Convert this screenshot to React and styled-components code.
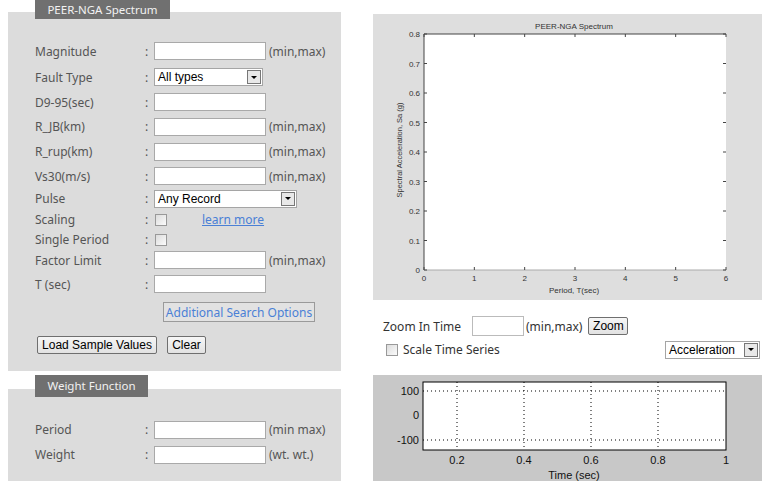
import React from 'react'
import styled, { createGlobalStyle } from 'styled-components';

const GlobalStyle = createGlobalStyle`
	html, body { margin: 0; padding: 0; background: #fff; }
	body { font-family: 'Noto Sans', 'DejaVu Sans', sans-serif; overflow: hidden; }
`;

const Page = styled.div`
	display: grid;
	grid-template-columns: 333px 389px;
	column-gap: 32px;
	padding-left: 8px;
	width: 784px;
	height: 481px;
	box-sizing: border-box;
	overflow: hidden;
`;

const Column = styled.div`
	display: flex;
	flex-direction: column;
`;

const Section = styled.section`
	margin-top: ${p => p.$top || 0}px;
	padding-bottom: ${p => p.$bottom || 0}px;
	background: linear-gradient(#fff 0 ${p => p.$offset}px, #dcdcdc ${p => p.$offset}px);
`;

const Tab = styled.div`
	margin-left: 27px;
	width: ${p => p.$w}px;
	height: ${p => p.$h}px;
	line-height: ${p => p.$h}px;
	background: #707070;
	color: #f2f2f2;
	font-size: 11.5px;
	text-align: center;
`;

const Form = styled.div`
	display: flex;
	flex-direction: column;
	padding: ${p => p.$pad}px 0 0 27px;
`;

const Row = styled.div`
	display: grid;
	grid-template-columns: 110px 9px auto;
	align-items: center;
	height: ${p => p.$h || 25}px;
	font-size: 12px;
	color: #555;
`;

const Colon = styled.span`
	color: #555;
`;

const Field = styled.div`
	display: flex;
	align-items: center;
`;

const TextInput = styled.input`
	box-sizing: border-box;
	width: ${p => p.$w || 112}px;
	height: ${p => p.$h || 18}px;
	border: 1px solid ${p => p.$border || '#a9a9a9'};
	background: #fff;
	margin: 0;
	padding: 0 3px;
	font-family: 'Liberation Sans', Arial, sans-serif;
	font-size: 12px;
`;

const Suffix = styled.span`
	margin-left: 3px;
	color: #555;
	font-size: 12px;
`;

const Select = styled.div`
	box-sizing: border-box;
	display: flex;
	align-items: center;
	justify-content: space-between;
	width: ${p => p.$w}px;
	height: 18px;
	border: 1px solid #a5a5a5;
	background: #fff;
	padding: 0 1px 0 3px;
	font-family: 'Liberation Sans', Arial, sans-serif;
	font-size: 12px;
	color: #000;
`;

const DropButton = styled.span`
	box-sizing: border-box;
	width: 14px;
	height: 14px;
	border: 1px solid #777;
	background: #e8e8e8;
	display: flex;
	align-items: center;
	justify-content: center;

	&::after {
		content: '';
		border-left: 3px solid transparent;
		border-right: 3px solid transparent;
		border-top: 3px solid #000;
	}
`;

const Check = styled.span`
	box-sizing: border-box;
	display: inline-block;
	width: 12px;
	height: 12px;
	margin-left: 1px;
	border: 1px solid #999;
	background: linear-gradient(135deg, #dcdcdc, #fbfbfb);
`;

const LearnLink = styled.a`
	margin-left: 35px;
	color: #4a80d6;
	text-decoration: underline;
	font-size: 12px;
`;

const OptionsButton = styled.button`
	margin: 5px 0 0 128px;
	width: 152px;
	height: 20px;
	padding: 0;
	border: 1px solid #9a9a9a;
	background: #e2e2e2;
	color: #4a80d6;
	font-family: 'Noto Sans', sans-serif;
	font-size: 12px;
`;

const ButtonRow = styled.div`
	display: flex;
	gap: 10px;
	margin: 14px 0 0 2px;
`;

const ClassicButton = styled.button`
	box-sizing: border-box;
	width: ${p => p.$w}px;
	height: 18px;
	padding: 0;
	border: 1px solid #6f6f6f;
	border-radius: 2px;
	background: linear-gradient(#f6f6f6, #e2e2e2);
	color: #000;
	font-family: 'Liberation Sans', Arial, sans-serif;
	font-size: 12px;
`;

const ChartPanel = styled.div`
	margin-top: ${p => p.$top}px;
	height: ${p => p.$h}px;
	background: ${p => p.$bg};
	svg { display: block; }
`;

const ZoomRow = styled.div`
	display: flex;
	align-items: center;
	margin-top: 16px;
	height: 20px;
	padding-left: 10px;
	font-size: 12px;
	color: #333;
`;

const ZoomLabel = styled.span`
	width: 89px;
`;

const ZoomSuffix = styled.span`
	margin: 0 6px 0 2px;
	color: #333;
`;

const ScaleRow = styled.div`
	display: flex;
	align-items: center;
	justify-content: space-between;
	margin-top: 5px;
	height: 17px;
	padding: 0 2px 0 12px;
	font-size: 12px;
	color: #333;
`;

const ScaleLabel = styled.label`
	display: flex;
	align-items: center;
	gap: 5px;
`;

const chartText = { fontFamily: "'Liberation Sans', Arial, sans-serif", fill: '#333' };

function SpectrumChart(){
	const left = 51, right = 353, top = 20, bottom = 256;
	const yLabels = ['0.8','0.7','0.6','0.5','0.4','0.3','0.2','0.1','0'];
	const ys = yLabels.map((_, i) => top + i * (bottom - top) / 8);
	const xs = [0,1,2,3,4,5,6].map(i => left + i * (right - left) / 6);
	return (
		<svg width="389" height="286" viewBox="0 0 389 286">
			<text x="201" y="15" textAnchor="middle" fontSize="8" style={chartText}>PEER-NGA Spectrum</text>
			<rect x={left} y={top} width={right - left} height={bottom - top} fill="#fff" />
			<line x1={left} y1={top} x2={right} y2={top} stroke="#444" />
			<line x1={left} y1={top} x2={left} y2={bottom} stroke="#444" />
			<line x1={left} y1={bottom} x2={right} y2={bottom} stroke="#aaa" />
			{ys.map((y, i) => (
				<g key={i}>
					<line x1={left} y1={y} x2={left + 3} y2={y} stroke="#444" />
					<line x1={right - 3} y1={y} x2={right} y2={y} stroke="#444" />
					<text x={left - 4} y={y + 3} textAnchor="end" fontSize="8" style={chartText}>{yLabels[i]}</text>
				</g>
			))}
			{xs.map((x, i) => (
				<g key={i}>
					<line x1={x} y1={top} x2={x} y2={top + 3} stroke="#444" />
					<line x1={x} y1={bottom - 3} x2={x} y2={bottom} stroke="#444" />
					<text x={x} y={bottom + 11} textAnchor="middle" fontSize="8" style={chartText}>{i}</text>
				</g>
			))}
			<text x="201" y="279" textAnchor="middle" fontSize="8" style={chartText}>Period, T(sec)</text>
			<text transform="translate(29 136) rotate(-90)" textAnchor="middle" fontSize="7.5" style={chartText}>Spectral Acceleration, Sa (g)</text>
		</svg>
	);
}

function TimeChart(){
	const left = 50, right = 353, top = 7, bottom = 75;
	const grid = [84, 151, 218, 285];
	const rows = [{ y: 16, t: '100' }, { y: 40, t: '0' }, { y: 65, t: '-100' }];
	const ticks = [{ x: 84, t: '0.2' }, { x: 151, t: '0.4' }, { x: 218, t: '0.6' }, { x: 285, t: '0.8' }, { x: 353, t: '1' }];
	const style = { fontFamily: "'Liberation Sans', Arial, sans-serif", fill: '#111' };
	return (
		<svg width="389" height="106" viewBox="0 0 389 106">
			<rect x={left} y={top} width={right - left} height={bottom - top} fill="#fff" stroke="#000" />
			{grid.map(x => (
				<line key={x} x1={x} y1={top} x2={x} y2={bottom} stroke="#000" strokeDasharray="1 3" />
			))}
			<line x1={left} y1={16} x2={right} y2={16} stroke="#000" strokeDasharray="1 3" />
			<line x1={left} y1={65} x2={right} y2={65} stroke="#000" strokeDasharray="1 3" />
			{rows.map(r => (
				<text key={r.t} x={left - 4} y={r.y + 4} textAnchor="end" fontSize="11" style={style}>{r.t}</text>
			))}
			{ticks.map(t => (
				<text key={t.t} x={t.x} y={bottom + 14} textAnchor="middle" fontSize="11" style={style}>{t.t}</text>
			))}
			<text x="201" y="104" textAnchor="middle" fontSize="11" style={style}>Time (sec)</text>
		</svg>
	);
}

function InputRow({label, h, suffix, w}){
	return (
		<Row $h={h}>
			<span>{label}</span>
			<Colon>:</Colon>
			<Field>
				<TextInput $w={w} />
				{suffix && <Suffix>{suffix}</Suffix>}
			</Field>
		</Row>
	);
}

export default function App(){
	return <>
		<GlobalStyle />
		<Page>
			<Column>
				<Section $offset={12} $bottom={17}>
					<Tab $w={135} $h={19}>PEER-NGA Spectrum</Tab>
					<Form $pad={19}>
						<InputRow label="Magnitude" h={26} suffix="(min,max)" />
						<Row $h={26}>
							<span>Fault Type</span>
							<Colon>:</Colon>
							<Field><Select $w={109}>All types<DropButton /></Select></Field>
						</Row>
						<InputRow label="D9-95(sec)" h={24} />
						<InputRow label="R_JB(km)" h={25} suffix="(min,max)" />
						<InputRow label="R_rup(km)" h={25} suffix="(min,max)" />
						<InputRow label="Vs30(m/s)" h={24} suffix="(min,max)" />
						<Row $h={21}>
							<span>Pulse</span>
							<Colon>:</Colon>
							<Field><Select $w={143}>Any Record<DropButton /></Select></Field>
						</Row>
						<Row $h={21}>
							<span>Scaling</span>
							<Colon>:</Colon>
							<Field><Check /><LearnLink href="#">learn more</LearnLink></Field>
						</Row>
						<Row $h={19}>
							<span>Single Period</span>
							<Colon>:</Colon>
							<Field><Check /></Field>
						</Row>
						<InputRow label="Factor Limit" h={22} suffix="(min,max)" />
						<InputRow label="T (sec)" h={26} />
						<div>
							<OptionsButton>Additional Search Options</OptionsButton>
						</div>
						<ButtonRow>
							<ClassicButton $w={120}>Load Sample Values</ClassicButton>
							<ClassicButton $w={39}>Clear</ClassicButton>
						</ButtonRow>
					</Form>
				</Section>
				<Section $top={4} $offset={14} $bottom={40}>
					<Tab $w={113} $h={22}>Weight Function</Tab>
					<Form $pad={20}>
						<InputRow label="Period" h={25} suffix="(min max)" />
						<InputRow label="Weight" h={25} suffix="(wt. wt.)" />
					</Form>
				</Section>
			</Column>
			<Column>
				<ChartPanel $top={14} $h={286} $bg="#dedede">
					<SpectrumChart />
				</ChartPanel>
				<ZoomRow>
					<ZoomLabel>Zoom In Time</ZoomLabel>
					<TextInput $w={52} $h={20} $border="#bbb" />
					<ZoomSuffix>(min,max)</ZoomSuffix>
					<ClassicButton $w={40}>Zoom</ClassicButton>
				</ZoomRow>
				<ScaleRow>
					<ScaleLabel><Check />Scale Time Series</ScaleLabel>
					<Select $w={95}>Acceleration<DropButton /></Select>
				</ScaleRow>
				<ChartPanel $top={17} $h={106} $bg="#c8c8c8">
					<TimeChart />
				</ChartPanel>
			</Column>
		</Page>
	</>
}
